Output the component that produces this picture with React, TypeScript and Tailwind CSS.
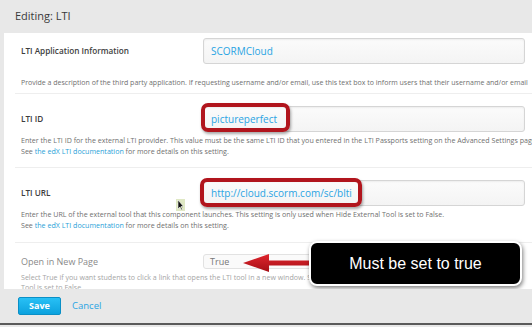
const fieldInput =
  'h-[26px] w-full rounded-[3px] border border-[#d5d5d5] bg-gradient-to-b from-[#fbfbfb] to-[#f4f4f4] shadow-[inset_0_1px_2px_rgba(0,0,0,0.06)] pl-[7px] flex items-center text-[10px] text-[#2aa4e3]'

const Highlight = ({ className }: { className: string }) => (
  <div
    className={`absolute rounded-[7px] border-[4px] border-[#b1151d] shadow-[1px_2px_3px_rgba(0,0,0,0.35)] ${className}`}
  />
)

const App = () => {
  return (
    <div className="w-[532px] h-[327px] overflow-hidden bg-[#e8e8e8] font-['Open_Sans','Liberation_Sans',sans-serif] text-[#333]">
      {/* Header */}
      <div className="h-[33px] flex items-center pl-[15px] text-[11px] text-[#3a3a3a]">Editing: LTI</div>

      {/* Body */}
      <div className="relative h-[256px] ml-[4px] bg-white overflow-hidden">
        {/* LTI Application Information */}
        <div className="ml-[11px] pl-[6px] pt-[5px] pb-[5px] border-b border-[#eeeeee]">
          <div className="flex items-center">
            <div className="w-[182px] shrink-0 text-[8.2px] font-semibold text-[#3d3d3d]">LTI Application Information</div>
            <div className="flex-1 pr-[7px]">
              <div className={fieldInput}>SCORMCloud</div>
            </div>
          </div>
          <div className="mt-[13px] h-[11px] leading-[11px] whitespace-nowrap overflow-hidden text-[7px] text-[#6f6f6f]">
            Provide a description of the third party application. If requesting username and/or email, use this text box to inform users that their username and/or email
          </div>
        </div>

        {/* LTI ID */}
        <div className="ml-[11px] pl-[6px] pt-[12px] pb-[10px] border-b border-[#eeeeee]">
          <div className="flex items-center">
            <div className="w-[182px] shrink-0 text-[8.2px] font-semibold text-[#3d3d3d]">LTI ID</div>
            <div className="relative flex-1 pr-[7px]">
              <div className={fieldInput}>pictureperfect</div>
              <Highlight className="-left-[2px] -top-[3px] w-[89px] h-[29px]" />
            </div>
          </div>
          <div className="mt-[3px] leading-[11px] whitespace-nowrap overflow-hidden text-[7.1px] text-[#6f6f6f]">
            <div>Enter the LTI ID for the external LTI provider. This value must be the same LTI ID that you entered in the LTI Passports setting on the Advanced Settings page</div>
            <div>
              See <span className="text-[#2a9fd8]">the edX LTI documentation</span> for more details on this setting.
            </div>
          </div>
        </div>

        {/* LTI URL */}
        <div className="relative ml-[11px] pl-[6px] pt-[12px] pb-[11px] border-b border-[#eeeeee]">
          <div className="flex items-center">
            <div className="w-[182px] shrink-0 text-[8.2px] font-semibold text-[#3d3d3d]">LTI URL</div>
            <div className="relative flex-1 pr-[7px]">
              <div className={fieldInput}>http://cloud.scorm.com/sc/blti</div>
              <Highlight className="-left-[3px] -top-[2px] w-[162px] h-[29px]" />
            </div>
          </div>
          <div className="mt-[3px] leading-[11px] whitespace-nowrap text-[7.1px] text-[#6f6f6f]">
            <div>Enter the URL of the external tool that this component launches. This setting is only used when Hide External Tool is set to False.</div>
            <div>
              See <span className="text-[#2a9fd8]">the edX LTI documentation</span> for more details on this setting.
            </div>
          </div>
          {/* mouse cursor */}
          <svg className="absolute left-[161px] top-[31px]" width="9" height="12" viewBox="0 0 9 12">
            <rect x="0" y="0" width="9" height="12" fill="#dfe8c4" />
            <rect x="1" y="2" width="2" height="2" fill="#c6d79a" />
            <rect x="5" y="7" width="2" height="2" fill="#c6d79a" />
            <path d="M2 1 L2 10 L4 8 L5.5 11 L6.5 10.5 L5 7.5 L7.5 7.5 Z" fill="#111" stroke="#fff" strokeWidth="0.6" />
          </svg>
        </div>

        {/* Open in New Page */}
        <div className="ml-[11px] pl-[6px] pt-[11px]">
          <div className="flex items-center">
            <div className="w-[182px] shrink-0 text-[9px] text-[#8a8a8a]">Open in New Page</div>
            <div className="h-[15px] w-[110px] rounded-[3px] border border-[#e2e2e2] bg-[#fafafa] pl-[6px] flex items-center text-[9px] text-[#777]">
              True
            </div>
          </div>
          <div className="mt-[3px] leading-[10px] whitespace-nowrap text-[7.1px] text-[#a5a5a5]">
            <div>Select True if you want students to click a link that opens the LTI tool in a new window. Select False</div>
            <div>Tool is set to False.</div>
          </div>
        </div>

        {/* Arrow */}
        <svg className="absolute left-[238px] top-[220px]" width="76" height="20" viewBox="0 0 76 20">
          <defs>
            <linearGradient id="arrowFill" x1="0" y1="0" x2="0" y2="1">
              <stop offset="0" stopColor="#e0262e" />
              <stop offset="1" stopColor="#a50f16" />
            </linearGradient>
          </defs>
          <path d="M1 10 L27 1 L27 7.5 L76 7.5 L76 12.5 L27 12.5 L27 19 Z" fill="url(#arrowFill)" />
        </svg>

        {/* Callout */}
        <div className="absolute left-[305px] top-[208px] w-[213px] h-[45px] rounded-[8px] border-[2px] border-white bg-black shadow-[1px_2px_4px_rgba(0,0,0,0.5)] flex items-center justify-center font-['Liberation_Sans',Arial,sans-serif] text-[16px] text-white">
          Must be set to true
        </div>
      </div>

      {/* Footer */}
      <div className="h-[36px] flex items-center pl-[18px] gap-[11px] border-b-[2px] border-[#5a5a5a]">
        <button className="h-[18px] w-[43px] rounded-[2px] border border-[#0a8fc6] bg-gradient-to-b from-[#27c0f5] to-[#0aa2de] text-[9px] font-bold text-white">
          Save
        </button>
        <span className="text-[9.5px] text-[#2aa4e3]">Cancel</span>
      </div>
    </div>
  )
}

export default App
